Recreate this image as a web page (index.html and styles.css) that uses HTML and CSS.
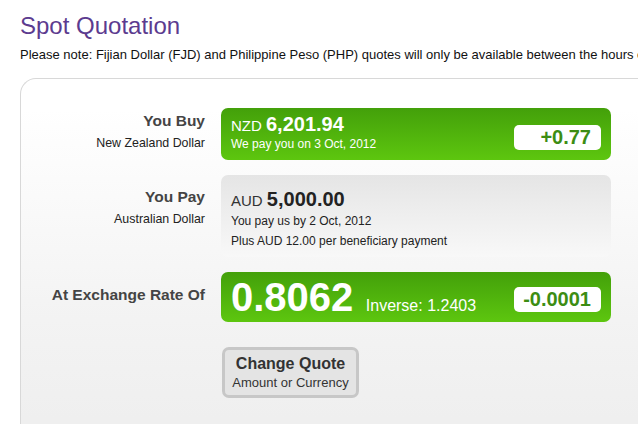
FILE: index.html
```html
<!DOCTYPE html>
<html lang="en">
<head>
    <meta charset="UTF-8">
    <meta name="viewport" content="width=device-width, initial-scale=1.0">
    <title>Spot Quotation</title>
    <link rel="stylesheet" href="styles.css">
</head>
<body>
    <div class="page">
        <h1>Spot Quotation</h1>
        <p class="note">Please note: Fijian Dollar (FJD) and Philippine Peso (PHP) quotes will only be available between the hours of 9am and 5pm NZT.</p>

        <div class="panel">
            <div class="label label-buy">
                <div class="label-title">You Buy</div>
                <div class="label-sub">New Zealand Dollar</div>
            </div>
            <div class="quote-box green">
                <div class="quote-text">
                    <div class="amount"><span class="ccy">NZD</span> <strong>6,201.94</strong></div>
                    <div class="small">We pay you on 3 Oct, 2012</div>
                </div>
                <div class="badge">+0.77</div>
            </div>

            <div class="label label-pay">
                <div class="label-title">You Pay</div>
                <div class="label-sub">Australian Dollar</div>
            </div>
            <div class="quote-box grey">
                <div class="quote-text">
                    <div class="amount"><span class="ccy">AUD</span> <strong>5,000.00</strong></div>
                    <div class="small">You pay us by 2 Oct, 2012</div>
                    <div class="small fee">Plus AUD 12.00 per beneficiary payment</div>
                </div>
            </div>

            <div class="label label-rate">
                <div class="label-title">At Exchange Rate Of</div>
            </div>
            <div class="quote-box green rate-box">
                <div class="rate"><strong>0.8062</strong> <span class="inverse">Inverse: 1.2403</span></div>
                <div class="badge">-0.0001</div>
            </div>

            <div></div>
            <div class="actions">
                <button class="change-btn">
                    <span class="btn-title">Change Quote</span>
                    <span class="btn-sub">Amount or Currency</span>
                </button>
            </div>
        </div>
    </div>
</body>
</html>
```

FILE: styles.css
```css
html, body {
    margin: 0;
    padding: 0;
    background: #fff;
    overflow: hidden;
}

body {
    font-family: "Liberation Sans", Arial, sans-serif;
    color: #222;
}

.page {
    padding-left: 20px;
    width: 760px;
}

h1 {
    margin: 12px 0 0;
    font-size: 24px;
    line-height: 28px;
    font-weight: normal;
    color: #5c3b8f;
}

.note {
    margin: 7px 0 0;
    font-size: 13px;
    line-height: 16px;
    white-space: nowrap;
    color: #111;
}

.panel {
    margin-top: 15px;
    border-top: 1px solid #d8d8d8;
    border-left: 1px solid #d8d8d8;
    border-top-left-radius: 16px;
    background: linear-gradient(#fff 0, #fff 30px, #f3f3f3 240px, #efefef 340px);
    padding: 29px 0 40px;
    display: grid;
    grid-template-columns: 184px 390px;
    column-gap: 16px;
    row-gap: 15px;
}

/* labels on the left */
.label {
    text-align: right;
}

.label-title {
    font-size: 15.5px;
    line-height: 18px;
    font-weight: bold;
    color: #444;
}

.label-sub {
    margin-top: 6px;
    font-size: 12.4px;
    line-height: 14px;
    color: #222;
}

.label-buy { padding-top: 4px; }
.label-pay { padding-top: 13px; }
.label-rate { padding-top: 14px; }

/* quote boxes */
.quote-box {
    border-radius: 7px;
    display: flex;
    justify-content: space-between;
    padding: 6px 10px 9px;
}

.green {
    background: linear-gradient(#43a00a, #5dc60f);
    color: #fff;
}

.grey {
    background: linear-gradient(#e5e5e5, #f8f8f8);
    color: #222;
    padding-top: 14px;
}

.amount {
    height: 22px;
    font-size: 15px;
    line-height: 22px;
    white-space: nowrap;
}

.amount strong {
    font-size: 20px;
    line-height: 20px;
}

.grey .ccy {
    color: #333;
}

.small {
    margin-top: 1px;
    font-size: 12px;
    line-height: 14px;
}

.grey .small {
    margin-top: 3px;
}

.grey .fee {
    margin-top: 6px;
}

.badge {
    align-self: flex-end;
    margin-bottom: 1px;
    width: 77px;
    height: 25px;
    padding-right: 10px;
    background: #fff;
    border-radius: 5px;
    text-align: right;
    font-size: 20px;
    line-height: 25px;
    font-weight: bold;
    color: #3c8d13;
}

.rate-box {
    height: 50px;
    padding: 0 10px;
    box-sizing: border-box;
    align-items: center;
}

.rate-box .badge {
    margin-bottom: 10px;
}

.rate {
    height: 40px;
    line-height: 40px;
    white-space: nowrap;
}

.rate strong {
    font-size: 40px;
}

.inverse {
    margin-left: 8px;
    font-size: 16px;
}

/* change quote button */
.actions {
    margin-top: 10px;
}

.change-btn {
    display: flex;
    flex-direction: column;
    align-items: center;
    width: 137px;
    height: 51px;
    margin-left: 1px;
    padding: 5px 0 0;
    border: 3px solid #c7c7c7;
    border-radius: 7px;
    background: #e4e4e4;
    font-family: inherit;
    color: #333;
    cursor: pointer;
    box-sizing: border-box;
}

.btn-title {
    font-size: 16px;
    line-height: 18px;
    font-weight: bold;
}

.btn-sub {
    margin-top: 2px;
    font-size: 13px;
    line-height: 15px;
}
```
